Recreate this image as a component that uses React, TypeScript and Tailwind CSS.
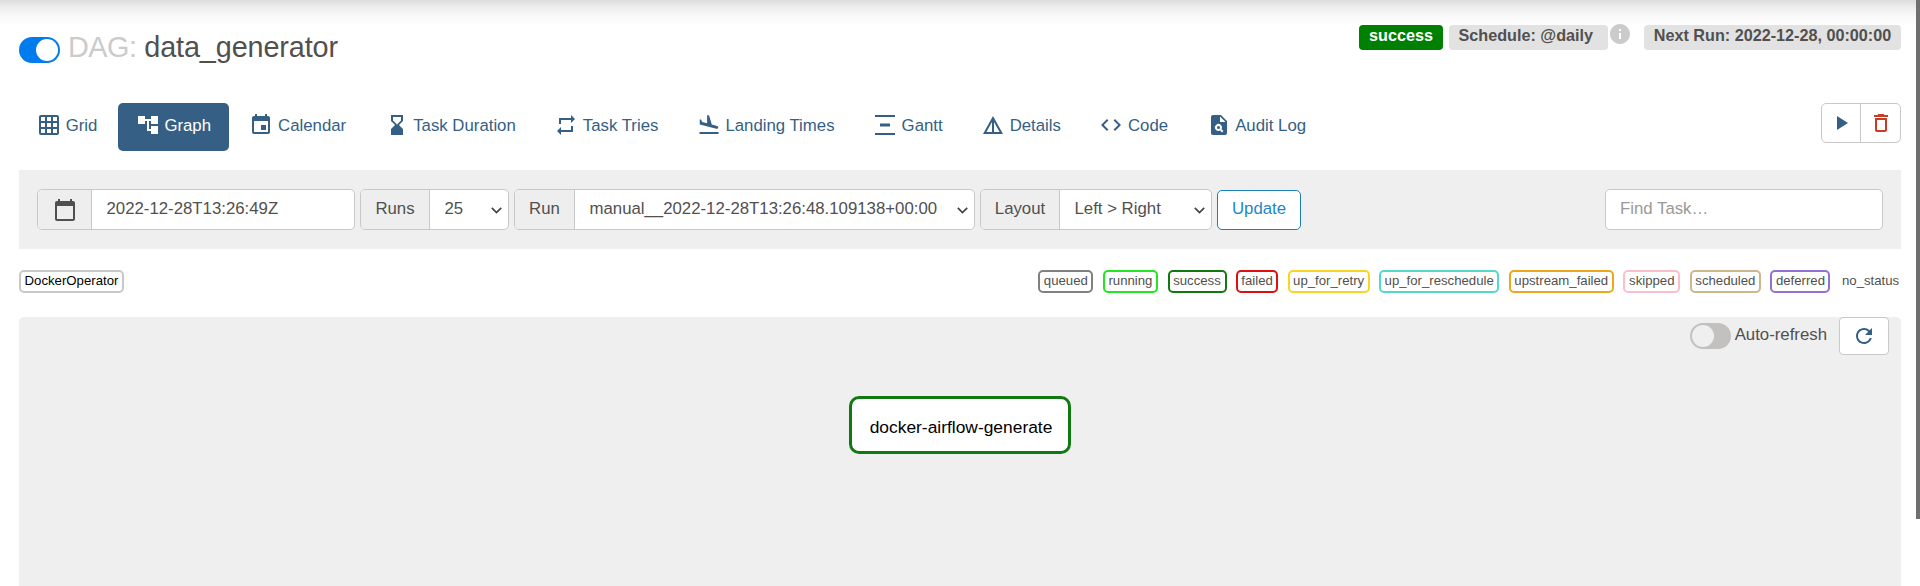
import React from "react";
import {
  MdGridOn, MdAccountTree, MdEvent, MdHourglassBottom, MdRepeat, MdFlightLand,
  MdVerticalDistribute, MdDetails, MdCode, MdPlagiarism, MdPlayArrow,
  MdDeleteOutline, MdRefresh, MdCalendarToday, MdInfo,
} from "react-icons/md";

const tabs = [
  { label: "Grid", Icon: MdGridOn },
  { label: "Graph", Icon: MdAccountTree, active: true },
  { label: "Calendar", Icon: MdEvent },
  { label: "Task Duration", Icon: MdHourglassBottom },
  { label: "Task Tries", Icon: MdRepeat },
  { label: "Landing Times", Icon: MdFlightLand },
  { label: "Gantt", Icon: MdVerticalDistribute },
  { label: "Details", Icon: MdDetails },
  { label: "Code", Icon: MdCode },
  { label: "Audit Log", Icon: MdPlagiarism },
];

const states = [
  { name: "queued", cls: "w-[55px] border-[#808080]" },
  { name: "running", cls: "w-[55px] border-[#22e622]" },
  { name: "success", cls: "w-[59px] border-[#107a10]" },
  { name: "failed", cls: "w-[42px] border-[#dd1111]" },
  { name: "up_for_retry", cls: "w-[82px] border-[#f7d520]" },
  { name: "up_for_reschedule", cls: "w-[120px] border-[#55d8cc]" },
  { name: "upstream_failed", cls: "w-[105px] border-[#eda71c]" },
  { name: "skipped", cls: "w-[57px] border-[#f9c0cb]" },
  { name: "scheduled", cls: "w-[71px] border-[#d0b48c]" },
  { name: "deferred", cls: "w-[60px] border-[#9370d4]" },
  { name: "no_status", cls: "w-[61px] border-transparent" },
];

function Chevron() {
  return (
    <svg className="h-[7px] w-[11px] shrink-0" viewBox="0 0 11 7" fill="none" stroke="#444" strokeWidth="1.7">
      <path d="M0.8 0.8 L5.5 5.5 L10.2 0.8" />
    </svg>
  );
}

function Select({ label, value, labelCls, valueCls }: { label: string; value: string; labelCls: string; valueCls: string }) {
  return (
    <div className="flex h-[41px] overflow-hidden rounded-[5px] border border-[#c8c8c8] bg-white">
      <div className={"flex items-center justify-center border-r border-[#c8c8c8] bg-[#eeeeee] pb-0.5 " + labelCls}>{label}</div>
      <div className={"flex items-center justify-between pr-[6px] pl-[14.5px] " + valueCls}>
        <span className="pb-0.5">{value}</span>
        <span className="pt-0.5"><Chevron /></span>
      </div>
    </div>
  );
}

export default function App() {
  return (
    <div className="flex h-[586px] w-[1920px] overflow-hidden bg-white font-['Liberation_Sans',Arial,sans-serif] text-[16.8px] leading-6 whitespace-nowrap text-[#51504f]">
      <div className="flex min-w-0 flex-1 flex-col bg-[linear-gradient(to_bottom,#dcdcdc_0px,#ededed_7px,#f8f8f8_15px,#ffffff_26px)] pl-[19px]">
        <header className="flex h-[103px] w-[1882px] items-start justify-between">
          <div className="flex pt-[29px]">
            <div className="mt-[8px] flex h-[26px] w-[41px] justify-end rounded-full bg-[#017cee] p-[2px]">
              <div className="size-[22px] rounded-full bg-white" />
            </div>
            <h1 className="ml-[8px] text-[28.8px] leading-9 tracking-[-0.12px]"><span className="tracking-[-0.5px] text-[#cbcbcb]">DAG:</span> data_generator</h1>
          </div>
          <div className="flex pt-[25px] text-[16.2px] font-bold">
            <span className="h-[25px] w-[84px] rounded-[4px] bg-[#008000] text-center leading-[21px] text-white">success</span>
            <span className="ml-[6px] h-[25px] w-[159px] rounded-[4px] bg-[#e2e2e2] pl-[9.5px] leading-[21px]">Schedule: @daily</span>
            <MdInfo className="-mt-[3px] size-[24px] text-[#cbcbcb]" />
            <span className="ml-[12px] h-[25px] w-[257px] rounded-[4px] bg-[#e2e2e2] text-center leading-[21px]">Next Run: 2022-12-28, 00:00:00</span>
          </div>
        </header>

        <nav className="flex h-[67px] w-[1882px] items-start justify-between text-[#355f84]">
          <div className="flex gap-[2.4px]">
            {tabs.map(({ label, Icon, active }) => (
              <a key={label} className={"flex h-[48px] items-start gap-[4.65px] rounded-[5px] px-[18px] pt-[10px] " + (active ? "bg-[#355f84] text-white" : "")}>
                <Icon className="size-[24px]" />
                <span className="leading-[25px]">{label}</span>
              </a>
            ))}
          </div>
          <div className="flex h-[40px] w-[80px] overflow-hidden rounded-[5px] border border-[#c8c8c8] bg-white">
            <div className="flex w-[39px] items-center justify-center border-r border-[#c8c8c8] pb-px"><MdPlayArrow className="size-[24px]" /></div>
            <div className="flex flex-1 items-center justify-center pb-px"><MdDeleteOutline className="size-[24px] text-[#c93b22]" /></div>
          </div>
        </nav>

        <div className="flex h-[79px] w-[1882px] items-start justify-between bg-[#efefef] px-[18px] pt-[19px]">
          <div className="flex gap-[5px]">
            <div className="flex h-[41px] w-[318px] overflow-hidden rounded-[5px] border border-[#c8c8c8] bg-white">
              <div className="flex w-[54px] items-center justify-center border-r border-[#c8c8c8] bg-[#eeeeee]"><MdCalendarToday className="size-[24px]" /></div>
              <div className="flex items-center pb-0.5 pl-[14.5px]">2022-12-28T13:26:49Z</div>
            </div>
            <Select label="Runs" value="25" labelCls="w-[69px]" valueCls="w-[78px]" />
            <Select label="Run" value="manual__2022-12-28T13:26:48.109138+00:00" labelCls="w-[60px]" valueCls="w-[399px]" />
            <Select label="Layout" value="Left > Right" labelCls="w-[79px]" valueCls="w-[151px]" />
            <button className="mt-px h-[40px] w-[84px] rounded-[5px] border border-[#1b7fb8] bg-white pb-[3px] text-[#1b87cc]">Update</button>
          </div>
          <div className="flex h-[41px] w-[278px] items-center rounded-[5px] border border-[#c8c8c8] bg-white pb-0.5 pl-[14px] text-[#999]">Find Task…</div>
        </div>

        <div className="flex h-[68px] w-[1882px] items-start justify-between pt-[21px] text-[13.2px]">
          <span className="h-[23px] w-[105px] rounded-[5px] border-2 border-[#c8c8c8] bg-white text-center leading-[18px] text-black">DockerOperator</span>
          <div className="flex gap-[9.57px]">
            {states.map((s) => (
              <span key={s.name} className={"h-[23px] rounded-[5px] border-2 text-center leading-[18px] " + s.cls}>{s.name}</span>
            ))}
          </div>
        </div>

        <main className="flex w-[1882px] flex-1 flex-col rounded-t-[5px] bg-[#efefef]">
          <div className="flex h-[79px] items-start justify-end pr-[12px]">
            <div className="mt-[6px] flex h-[26px] w-[41px] rounded-full bg-[#c2c1c0] p-[2px]">
              <div className="size-[22px] rounded-full bg-[#efefef]" />
            </div>
            <span className="mt-[6px] ml-[4px]">Auto-refresh</span>
            <div className="ml-[12px] flex h-[38px] w-[50px] items-center justify-center rounded-[4px] border border-[#c8c8c8] bg-white pb-px text-[#355f84]">
              <MdRefresh className="size-[24px]" />
            </div>
          </div>
          <div className="ml-[830px] flex h-[58px] w-[222px] items-center justify-center rounded-[10px] border-[3px] border-[#107a10] bg-white pt-[4px] pl-[2px] text-[17.4px] text-black">docker-airflow-generate</div>
        </main>
      </div>
      <div className="h-[519px] w-[4px] shrink-0 bg-[#6f6f6f]" />
    </div>
  );
}
